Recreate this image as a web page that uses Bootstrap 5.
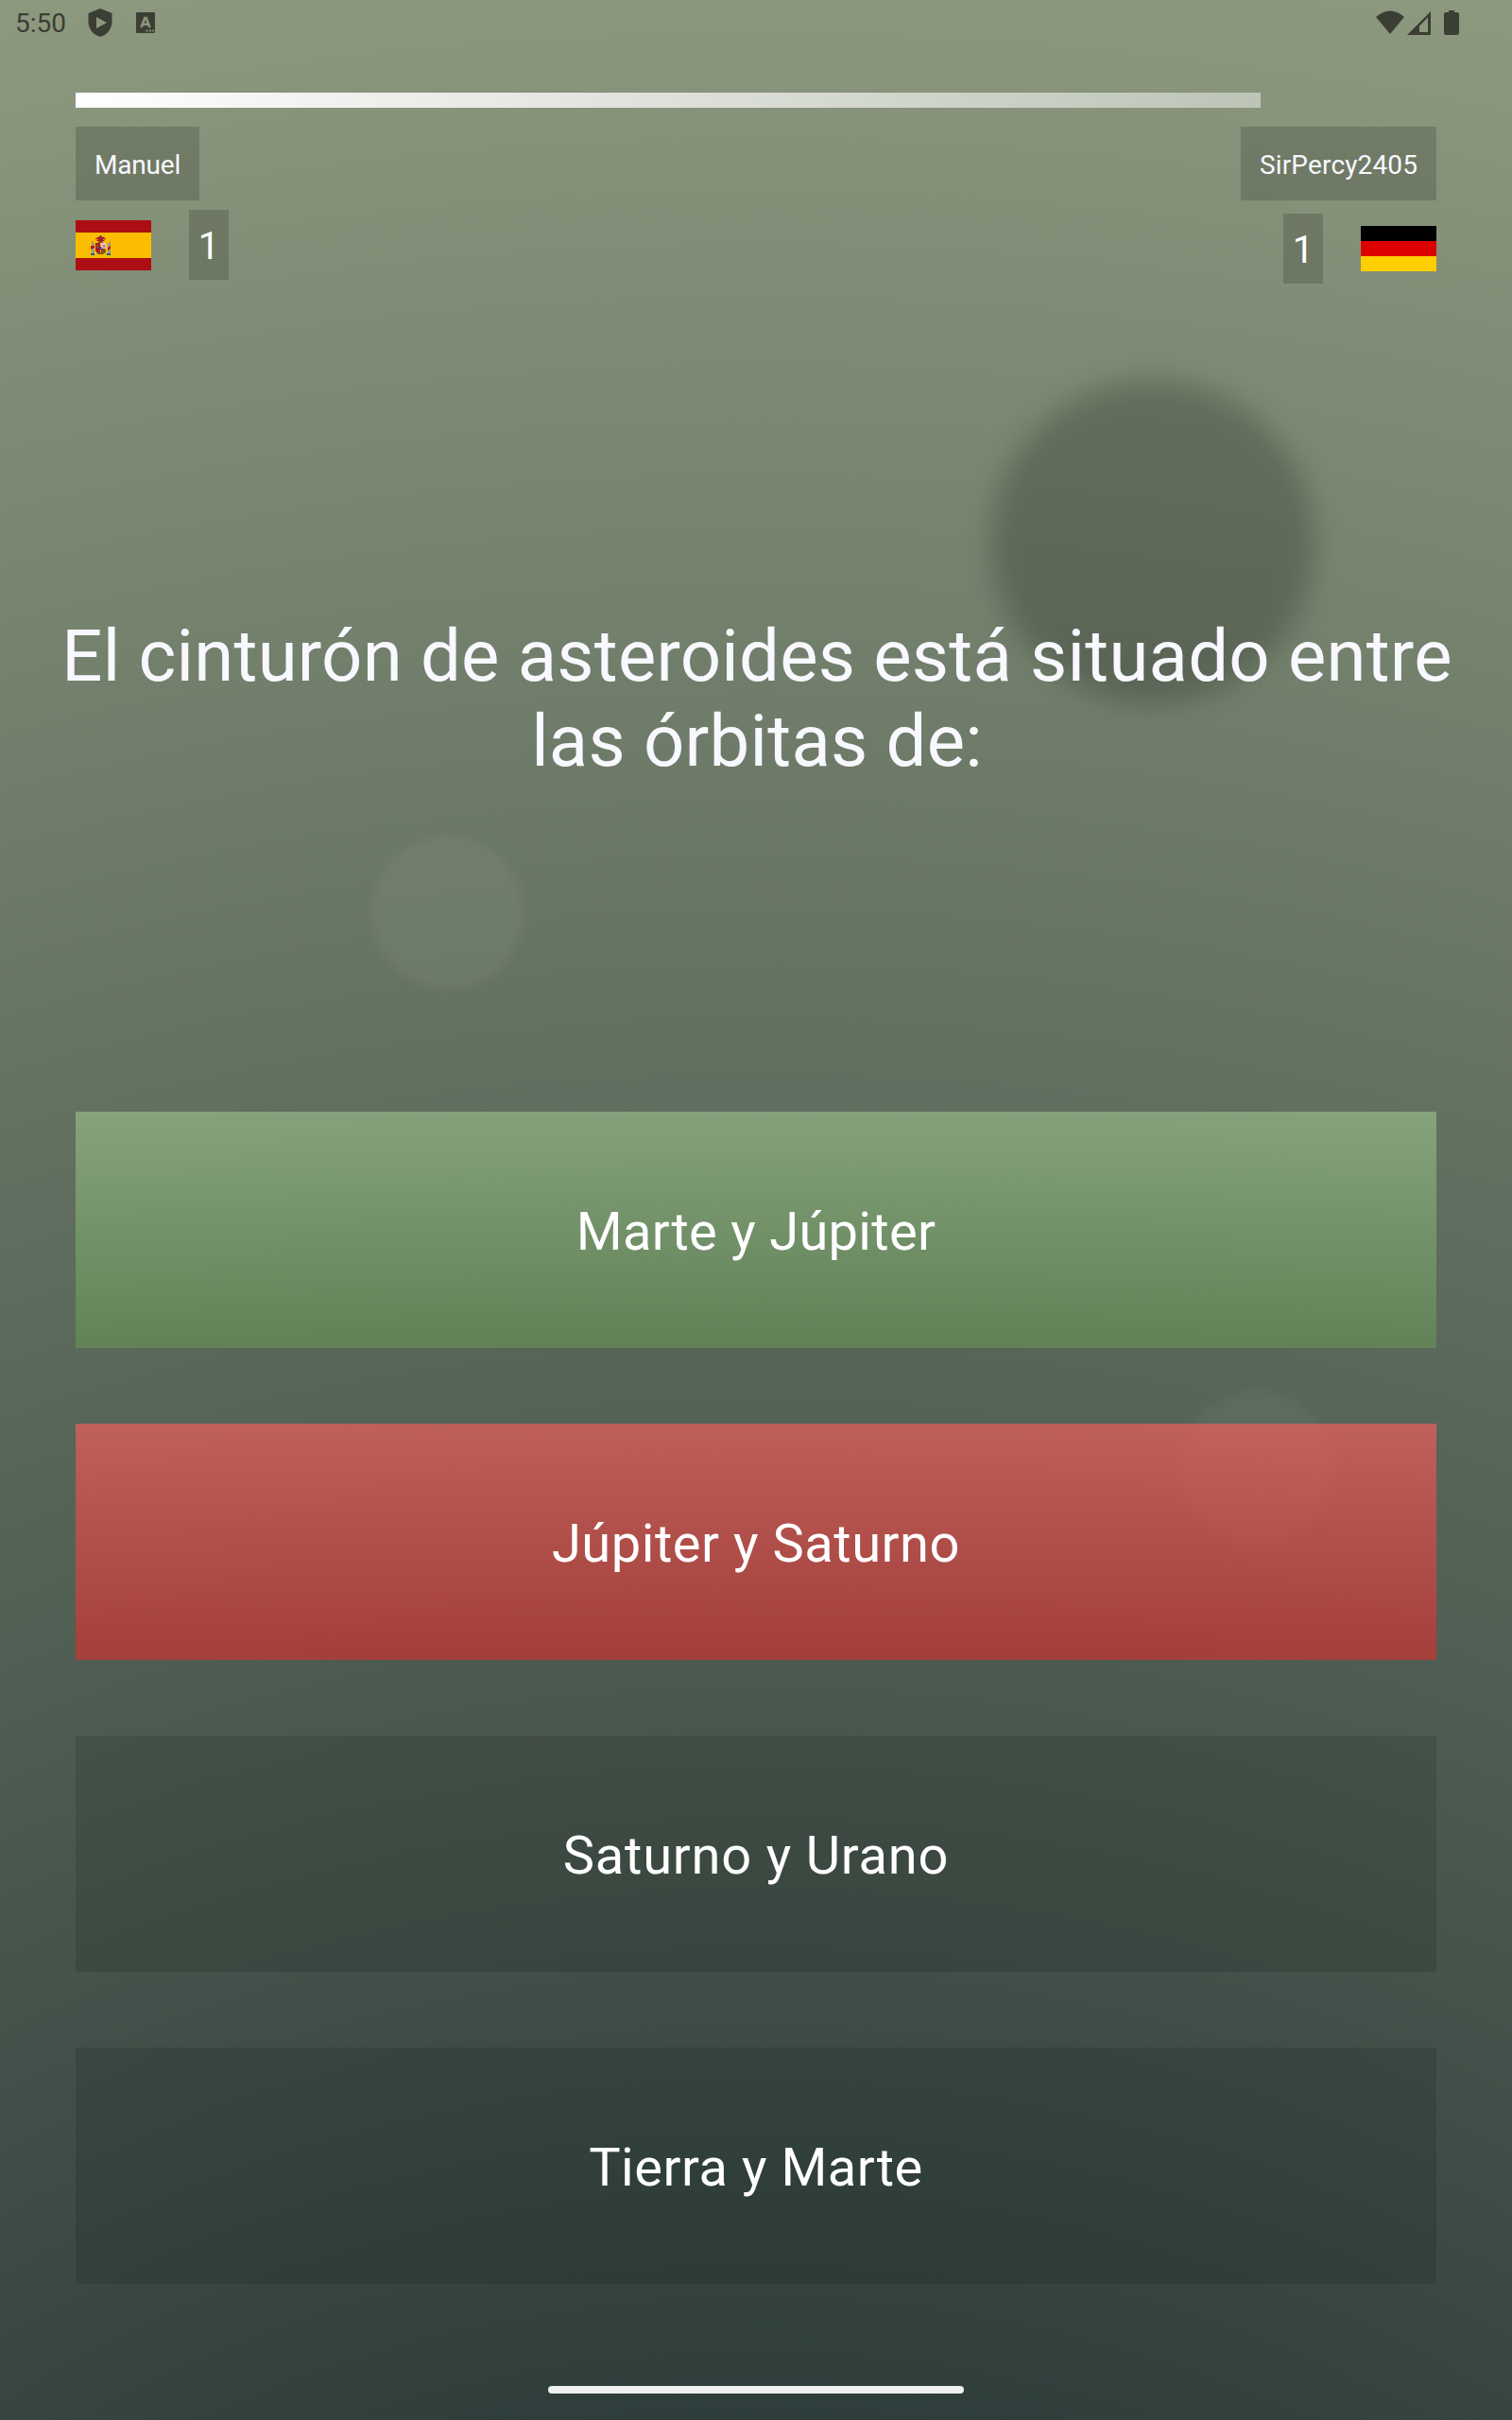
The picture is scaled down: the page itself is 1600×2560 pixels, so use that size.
<!DOCTYPE html>
<html lang="es">
<head>
<meta charset="utf-8">
<meta name="viewport" content="width=device-width, initial-scale=1">
<title>Quiz</title>
<link href="https://cdn.jsdelivr.net/npm/bootstrap@5.3.0/dist/css/bootstrap.min.css" rel="stylesheet">
<style>
body{font-family:Roboto,"Liberation Sans",sans-serif;color:#fff;height:2560px;overflow:hidden;
background:radial-gradient(circle 4000px at 800px 3840px,rgb(0,17,26),rgb(144,156,129))}
.orb{position:absolute;border-radius:50%}
.orb-dark{left:1049px;top:402px;width:342px;height:342px;background:rgba(0,0,0,.2);filter:blur(14px)}
.orb-a{left:393px;top:885px;width:162px;height:162px;background:rgba(255,255,255,.05);filter:blur(6px)}
.orb-b{left:1249px;top:1471px;width:162px;height:162px;background:rgba(255,255,255,.042);filter:blur(7px)}
.screen{height:2560px;position:relative}
.statusbar{height:50px;color:#3b3e33;font-size:28px;line-height:50px;padding-left:16px}
.statusbar svg,.flags svg{display:block}
.stage{padding:48px 80px 0}
.timer{height:16px;border-radius:0;background:none;margin-bottom:20px}
.timer .progress-bar{background:linear-gradient(90deg,#fff,rgba(255,255,255,.45))}
.tag{background:rgba(0,0,0,.16);color:#f8f8ff;font-size:28px;line-height:36px;padding:23px 0 19px 20px;width:131px}
.tag-home{letter-spacing:-.2px}
.tag-rival{width:207px;letter-spacing:.15px}
.score{background:rgba(0,0,0,.16);font-size:40px;line-height:72px;height:74px;width:42px;text-align:center;padding-top:3px}
.flags{gap:40px}
.flags-home{margin-top:10px}
.flags-rival{margin-top:14px}
.question{height:876px;padding:349px 0 0 2px;margin:0 -80px;font-size:76px;line-height:90px;color:#f8f8ff;font-weight:400;letter-spacing:.25px}
.answer{height:250px;border:0;border-radius:0;font-size:56px;line-height:66px;color:#fff;padding:3px 0 0}
.answers{gap:80px}
.idle{background:rgba(0,0,0,.11)}
.right{background:linear-gradient(rgba(169,212,154,.5),rgba(104,157,82,.5))}
.wrong{background:linear-gradient(rgba(254,93,93,.62),rgba(216,45,43,.62))}
.ls-2{letter-spacing:.3px}.ls-5{letter-spacing:.55px}.ls-8{letter-spacing:.8px}
.homebar{width:440px;height:8px;border-radius:4px;background:#eef1ee;margin:108px auto 0}
</style>
</head>
<body>
<div class="orb orb-dark"></div><div class="orb orb-a"></div><div class="orb orb-b"></div>
<div class="screen">
 <header class="statusbar d-flex">
  <span>5:50</span>
  <svg width="1530" height="50" viewBox="70 0 1530 50" fill="#3b3e33">
   <path fill-rule="evenodd" d="M106 9 118.500 14V23C118.500 31 113 37 106 39 99 37 93.500 31 93.500 23V14ZM102 18V30L113 24Z"/>
   <path d="M145 13H163Q164 13 164 14V34Q164 35 163 35H145Q144 35 144 34V14Q144 13 145 13Z"/>
   <g fill="none" stroke="#8b957c"><path stroke-width="2.600" d="M149.500 29 153.300 19H154.700L158.500 29M151 25.800H157"/><path stroke-width="1.800" d="M154.500 32.500H156.500M158 32.500H160M161.300 32.500H163"/></g>
   <path d="M1456 18Q1471 5 1486 18L1471 36Z"/>
   <path fill-rule="evenodd" d="M1489 37 1514 12V37ZM1502 34H1511V18.500L1502 27.500Z"/>
   <path d="M1533 11H1539V13H1542Q1544 13 1544 15V35Q1544 37 1542 37H1530Q1528 37 1528 35V15Q1528 13 1530 13H1533Z"/>
  </svg>
 </header>
 <main class="stage">
  <div class="progress timer"><div class="progress-bar" style="width:87.1%"></div></div>
  <div class="d-flex justify-content-between">
   <section class="d-flex flex-column align-items-start">
    <div class="tag tag-home">Manuel</div>
    <div class="flags flags-home d-flex align-items-center">
     <svg width="80" height="53" viewBox="0 0 80 53"><path fill="#ad0e13" d="M0 0H80V53H0Z"/><path fill="#fabd00" d="M0 13H80V40H0Z"/>
      <path fill="#9a9b8e" d="M17 24H20V36H17ZM34 24H37V36H34Z"/>
      <path fill="#b01822" d="M21 20 23 18 26.500 17 30 18 32 20 30 22H23ZM16 27H20V29L16 31ZM34 29 37 27V30L34 32ZM21 24H26V35H23L21 32ZM27 30H31V35H27Z"/>
      <path fill="#7b5b24" d="M24 22H29V24H24ZM22 26H24V29H22ZM28 31H32V34L29 36H23V34H28Z"/>
      <path fill="#e4bfc9" d="M27 24H32V30H27Z"/><path fill="#d267a5" d="M29 26H31V29H29Z"/>
      <path fill="#205a9d" d="M25.500 16H27.500V18H25.500ZM25.500 28H27.500V31H25.500ZM16 35H20V37H16ZM33 35H37V37H33Z"/>
      <path fill="#d99a20" d="M17 22H19V24H17ZM35 22H37V24H35ZM22 20H24V21H22ZM29 20H31V21H29Z"/>
     </svg>
     <div class="score">1</div>
    </div>
   </section>
   <section class="d-flex flex-column align-items-end">
    <div class="tag tag-rival">SirPercy2405</div>
    <div class="flags flags-rival d-flex align-items-center">
     <div class="score">1</div>
     <svg width="80" height="48"><path d="M0 0H80V16H0Z"/><path fill="#d00" d="M0 16H80V32H0Z"/><path fill="#ffce00" d="M0 32H80V48H0Z"/></svg>
    </div>
   </section>
  </div>
  <h1 class="question text-center mb-0">El cinturón de asteroides está situado entre<br>las órbitas de:</h1>
  <div class="answers d-flex flex-column">
   <button class="btn answer right ls-2">Marte y Júpiter</button>
   <button class="btn answer wrong ls-5">Júpiter y Saturno</button>
   <button class="btn answer idle ls-8">Saturno y Urano</button>
   <button class="btn answer idle ls-5">Tierra y Marte</button>
  </div>
 </main>
 <div class="homebar"></div>
</div>
<script src="https://cdn.jsdelivr.net/npm/bootstrap@5.3.0/dist/js/bootstrap.bundle.min.js"></script>
</body>
</html>
